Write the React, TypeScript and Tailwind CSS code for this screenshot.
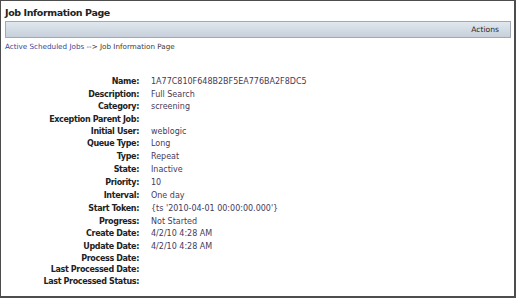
import React from "react";

type Row = { label: string; value?: string; h: string };

const rows: Row[] = [
  { label: "Name:", value: "1A77C810F648B2BF5EA776BA2F8DC5", h: "h-[13px]" },
  { label: "Description:", value: "Full Search", h: "h-[12px]" },
  { label: "Category:", value: "screening", h: "h-[13px]" },
  { label: "Exception Parent Job:", h: "h-[12px]" },
  { label: "Initial User:", value: "weblogic", h: "h-[12px]" },
  { label: "Queue Type:", value: "Long", h: "h-[13px]" },
  { label: "Type:", value: "Repeat", h: "h-[13px]" },
  { label: "State:", value: "Inactive", h: "h-[13px]" },
  { label: "Priority:", value: "10", h: "h-[13px]" },
  { label: "Interval:", value: "One day", h: "h-[13px]" },
  { label: "Start Token:", value: "{ts '2010-04-01 00:00:00.000'}", h: "h-[13px]" },
  { label: "Progress:", value: "Not Started", h: "h-[12px]" },
  { label: "Create Date:", value: "4/2/10 4:28 AM", h: "h-[13px]" },
  { label: "Update Date:", value: "4/2/10 4:28 AM", h: "h-[13px]" },
  { label: "Process Date:", h: "h-[11px]" },
  { label: "Last Processed Date:", h: "h-[11px]" },
  { label: "Last Processed Status:", h: "h-[13px]" },
];

export default function App() {
  return (
    <div className="w-[516px] h-[298px] bg-white border-t border-l border-r-2 border-b-2 border-[#4d4d4d] font-['DejaVu_Sans',sans-serif] text-[8px] overflow-hidden">
      <div className="h-[20px] pt-[6px] pl-[4px] text-[9.5px] leading-[12px] font-bold tracking-[-0.4px] text-[#222]">
        Job Information Page
      </div>
      <div className="ml-[4px] w-[506px] h-[17px] border border-[#a3a9b1] bg-gradient-to-b from-[#e1e7ee] to-[#c6d0db] flex items-center justify-end pr-[11px]">
        <span className="text-[7.6px] leading-[10px] text-[#2a2a2a]">Actions</span>
      </div>
      <div className="mt-[3px] pl-[4px] h-[11px] leading-[11px] text-[7.2px] whitespace-nowrap">
        <span className="text-[#34489a]">Active Scheduled Jobs</span>
        <span className="text-[#3a3a3a]"> --&gt; Job Information Page</span>
      </div>
      <div className="mt-[23px] flex flex-col">
        {rows.map((r) => (
          <div key={r.label} className={`flex items-center ${r.h}`}>
            <div className="w-[138px] text-right font-bold tracking-[-0.35px] text-[#222] whitespace-nowrap leading-[11px]">
              {r.label}
            </div>
            <div className="ml-[12px] text-[#463a5a] whitespace-nowrap leading-[11px]">{r.value ?? ""}</div>
          </div>
        ))}
      </div>
    </div>
  );
}
